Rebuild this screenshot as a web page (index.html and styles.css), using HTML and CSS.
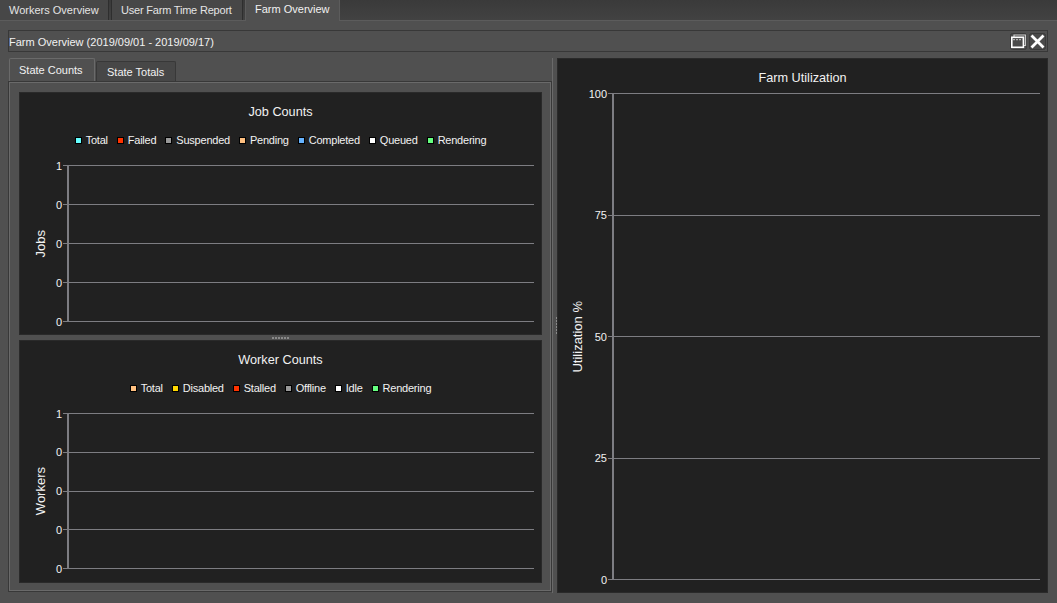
FILE: index.html
```html
<!DOCTYPE html>
<html lang="en">

<head>
    <meta charset="UTF-8">
    <title>Farm Overview</title>
    <link rel="stylesheet" href="styles.css">
</head>

<body>
    <ul class="tabbar">
        <li class="tab">Workers Overview</li>
        <li class="tab">User Farm Time Report</li>
        <li class="tab on">Farm Overview</li>
    </ul>
    <div class="main">
        <div class="panel-head">
            <span class="panel-title">Farm Overview (2019/09/01 - 2019/09/17)</span>
            <div class="panel-btns">
                <svg class="panel-btn" width="17" height="17" viewBox="0 0 17 17">
                    <rect x="0.5" y="0.5" width="16" height="16" rx="2" fill="#4a4a4a" stroke="#3a3a3a"/>
                    <path d="M4 4V2H15.5V12.5H14" fill="none" stroke="#c8c8c8" stroke-width="1.2"/>
                    <rect x="1.8" y="4.3" width="11.6" height="10" fill="#4a4a4a" stroke="#fff" stroke-width="1.6"/>
                    <path d="M3 6.6h9.5" stroke="#b0b0b0" stroke-width="1.4" stroke-dasharray="2 1"/>
                </svg>
                <svg class="panel-btn" width="17" height="17" viewBox="0 0 17 17">
                    <rect x="0.5" y="0.5" width="16" height="16" rx="2" fill="#4a4a4a" stroke="#3a3a3a"/>
                    <path d="M2.5 2.5L14.5 14.5M14.5 2.5L2.5 14.5" fill="none" stroke="#fff" stroke-width="2.8"/>
                </svg>
            </div>
        </div>
        <div class="panels">
            <div class="left">
                <ul class="subtabs">
                    <li class="subtab on">State Counts</li>
                    <li class="subtab">State Totals</li>
                </ul>
                <div class="pane">
                    <div class="chart">
                        <h2 class="chart-title">Job Counts</h2>
                        <ul class="legend">
                            <li><i class="c-total"></i>Total</li>
                            <li><i class="c-failed"></i>Failed</li>
                            <li><i class="c-gray"></i>Suspended</li>
                            <li><i class="c-pending"></i>Pending</li>
                            <li><i class="c-completed"></i>Completed</li>
                            <li><i class="c-white"></i>Queued</li>
                            <li><i class="c-green"></i>Rendering</li>
                        </ul>
                        <div class="plot-row">
                            <div class="axis-title"><span>Jobs</span></div>
                            <div class="plot">
                                <div class="row"><span>1</span><i></i></div>
                                <div class="row"><span>0</span><i></i></div>
                                <div class="row"><span>0</span><i></i></div>
                                <div class="row"><span>0</span><i></i></div>
                                <div class="row"><span>0</span><i></i></div>
                            </div>
                        </div>
                    </div>
                    <div class="hsplit"><b></b></div>
                    <div class="chart chart-low">
                        <h2 class="chart-title">Worker Counts</h2>
                        <ul class="legend">
                            <li><i class="c-pending"></i>Total</li>
                            <li><i class="c-disabled"></i>Disabled</li>
                            <li><i class="c-failed"></i>Stalled</li>
                            <li><i class="c-gray"></i>Offline</li>
                            <li><i class="c-white"></i>Idle</li>
                            <li><i class="c-green"></i>Rendering</li>
                        </ul>
                        <div class="plot-row">
                            <div class="axis-title"><span>Workers</span></div>
                            <div class="plot">
                                <div class="row"><span>1</span><i></i></div>
                                <div class="row"><span>0</span><i></i></div>
                                <div class="row"><span>0</span><i></i></div>
                                <div class="row"><span>0</span><i></i></div>
                                <div class="row"><span>0</span><i></i></div>
                            </div>
                        </div>
                    </div>
                </div>
            </div>
            <div class="vsplit"><b></b></div>
            <div class="chart chart-big">
                <h2 class="chart-title">Farm Utilization</h2>
                <div class="plot-row">
                    <div class="axis-title"><span>Utilization %</span></div>
                    <div class="plot">
                        <div class="row"><span>100</span><i></i></div>
                        <div class="row"><span>75</span><i></i></div>
                        <div class="row"><span>50</span><i></i></div>
                        <div class="row"><span>25</span><i></i></div>
                        <div class="row"><span>0</span><i></i></div>
                    </div>
                </div>
            </div>
        </div>
    </div>
</body>

</html>
```

FILE: styles.css
```css
* {
    margin: 0;
    padding: 0;
    box-sizing: border-box;
    list-style: none;
}

body {
    width: 1057px;
    height: 603px;
    overflow: hidden;
    background: #505050;
    color: #f2f2f2;
    font: 11px "Liberation Sans", "Noto Sans", sans-serif;
    white-space: nowrap;
}

.tabbar {
    display: flex;
    gap: 2px;
    height: 21px;
    background: linear-gradient(#3a3a3a, #424242);
    border-bottom: 1px solid #5c5c5c;
}

.tab {
    height: 20px;
    padding: 4px 8px 0;
    background: #474747;
    border-right: 1px solid #2e2e2e;
    border-left: 1px solid #2e2e2e;
    color: #e4e4e4;
}

.tab:nth-child(1) {
    width: 109px;
    border-left: 0;
    padding-left: 9px;
}

.tab:nth-child(2) {
    width: 132px;
    letter-spacing: -0.2px;
    padding-left: 9px;
}

.tab.on {
    width: 95px;
    height: 21px;
    padding: 3px 0 0 9px;
    background: #505050;
    border-color: #5c5c5c;
    color: #f2f2f2;
}

.main {
    padding: 9px 9px 0 8px;
}

.panel-head {
    display: flex;
    align-items: center;
    justify-content: space-between;
    height: 22px;
    border: 1px solid #383838;
}

.panel-title {
    padding-top: 2px;
}

.panel-btns {
    display: flex;
    gap: 2px;
    padding-right: 1px;
}

.panel-btn {
    display: block;
}

.panels {
    display: flex;
    margin-top: 6px;
}

.left {
    width: 544px;
}

.subtabs {
    display: flex;
    height: 23px;
    padding-left: 1px;
    align-items: flex-end;
}

.subtab {
    width: 80px;
    height: 20px;
    padding: 4px 0 0 10px;
    margin-left: 1px;
    background: #474747;
    border: 1px solid #383838;
    border-bottom: 0;
    border-radius: 2px 2px 0 0;
}

.subtab.on {
    width: 86px;
    height: 23px;
    margin-left: 0;
    padding: 5px 0 0 9px;
    background: #505050;
    border-color: #6a6a6a;
}

.pane {
    height: 511px;
    padding: 10px 9px 0 10px;
    border: 1px solid #383838;
    box-shadow: inset 0 0 0 1px #6a6a6a;
}

.hsplit {
    display: flex;
    justify-content: center;
    height: 5px;
    padding-top: 2px;
}

.hsplit b {
    width: 18px;
    height: 2px;
    background: repeating-linear-gradient(90deg, #8a8a8a 0 2px, transparent 2px 3px);
}

.vsplit {
    display: flex;
    align-items: center;
    width: 5px;
    padding-left: 3px;
    border-left: 1px solid #6a6a6a;
}

.vsplit b {
    width: 2px;
    height: 18px;
    background: repeating-linear-gradient(#8a8a8a 0 2px, transparent 2px 3px);
}

.chart {
    height: 243px;
    background: #212121;
    border: 1px solid #2a2a2a;
}

.chart-big {
    width: 491px;
    height: 535px;
}

.chart-title {
    height: 39px;
    padding-top: 12px;
    font-size: 12.7px;
    font-weight: normal;
    text-align: center;
}

.legend {
    display: flex;
    justify-content: center;
    gap: 9px;
    height: 33px;
    letter-spacing: -0.23px;
}

.legend li {
    display: flex;
    align-items: center;
    gap: 4px;
    height: 16px;
}

.legend i {
    width: 7px;
    height: 7px;
    border: 1px solid #000;
}

.c-total { background: #66ffff; }
.c-failed { background: #ff3300; }
.c-gray { background: #999999; }
.c-pending { background: #ffc080; }
.c-completed { background: #66b3ff; }
.c-white { background: #ffffff; }
.c-green { background: #66ff80; }
.c-disabled { background: #ffd700; }

.plot-row {
    display: flex;
    height: 157px;
    padding-right: 7px;
}

.chart-low .plot-row {
    height: 156px;
}

.chart-big .plot-row {
    height: 487px;
    margin-top: -5px;
}

.axis-title {
    display: flex;
    align-items: center;
    justify-content: center;
    width: 40px;
    font-size: 13px;
}

.axis-title span {
    writing-mode: vertical-rl;
    transform: rotate(180deg);
}

.plot {
    position: relative;
    display: flex;
    flex-direction: column;
    justify-content: space-between;
    flex: 1;
}

/* y axis sits over the start of the grid lines */
.plot::before {
    content: "";
    position: absolute;
    left: 7px;
    top: 0;
    bottom: 0;
    width: 2px;
    background: #7d7d82;
}

.row {
    display: flex;
    align-items: center;
    height: 1px;
}

.row span {
    flex: none;
    width: 2px;
    margin-right: 1px;
    direction: rtl;
    line-height: 12px;
}

.row i {
    flex: 1;
    height: 1px;
    background: #7d7d82;
}

.chart-big .axis-title {
    width: 39px;
}

.chart-big .plot::before {
    left: 15px;
}

.chart-big .row span {
    width: 10px;
}
```
